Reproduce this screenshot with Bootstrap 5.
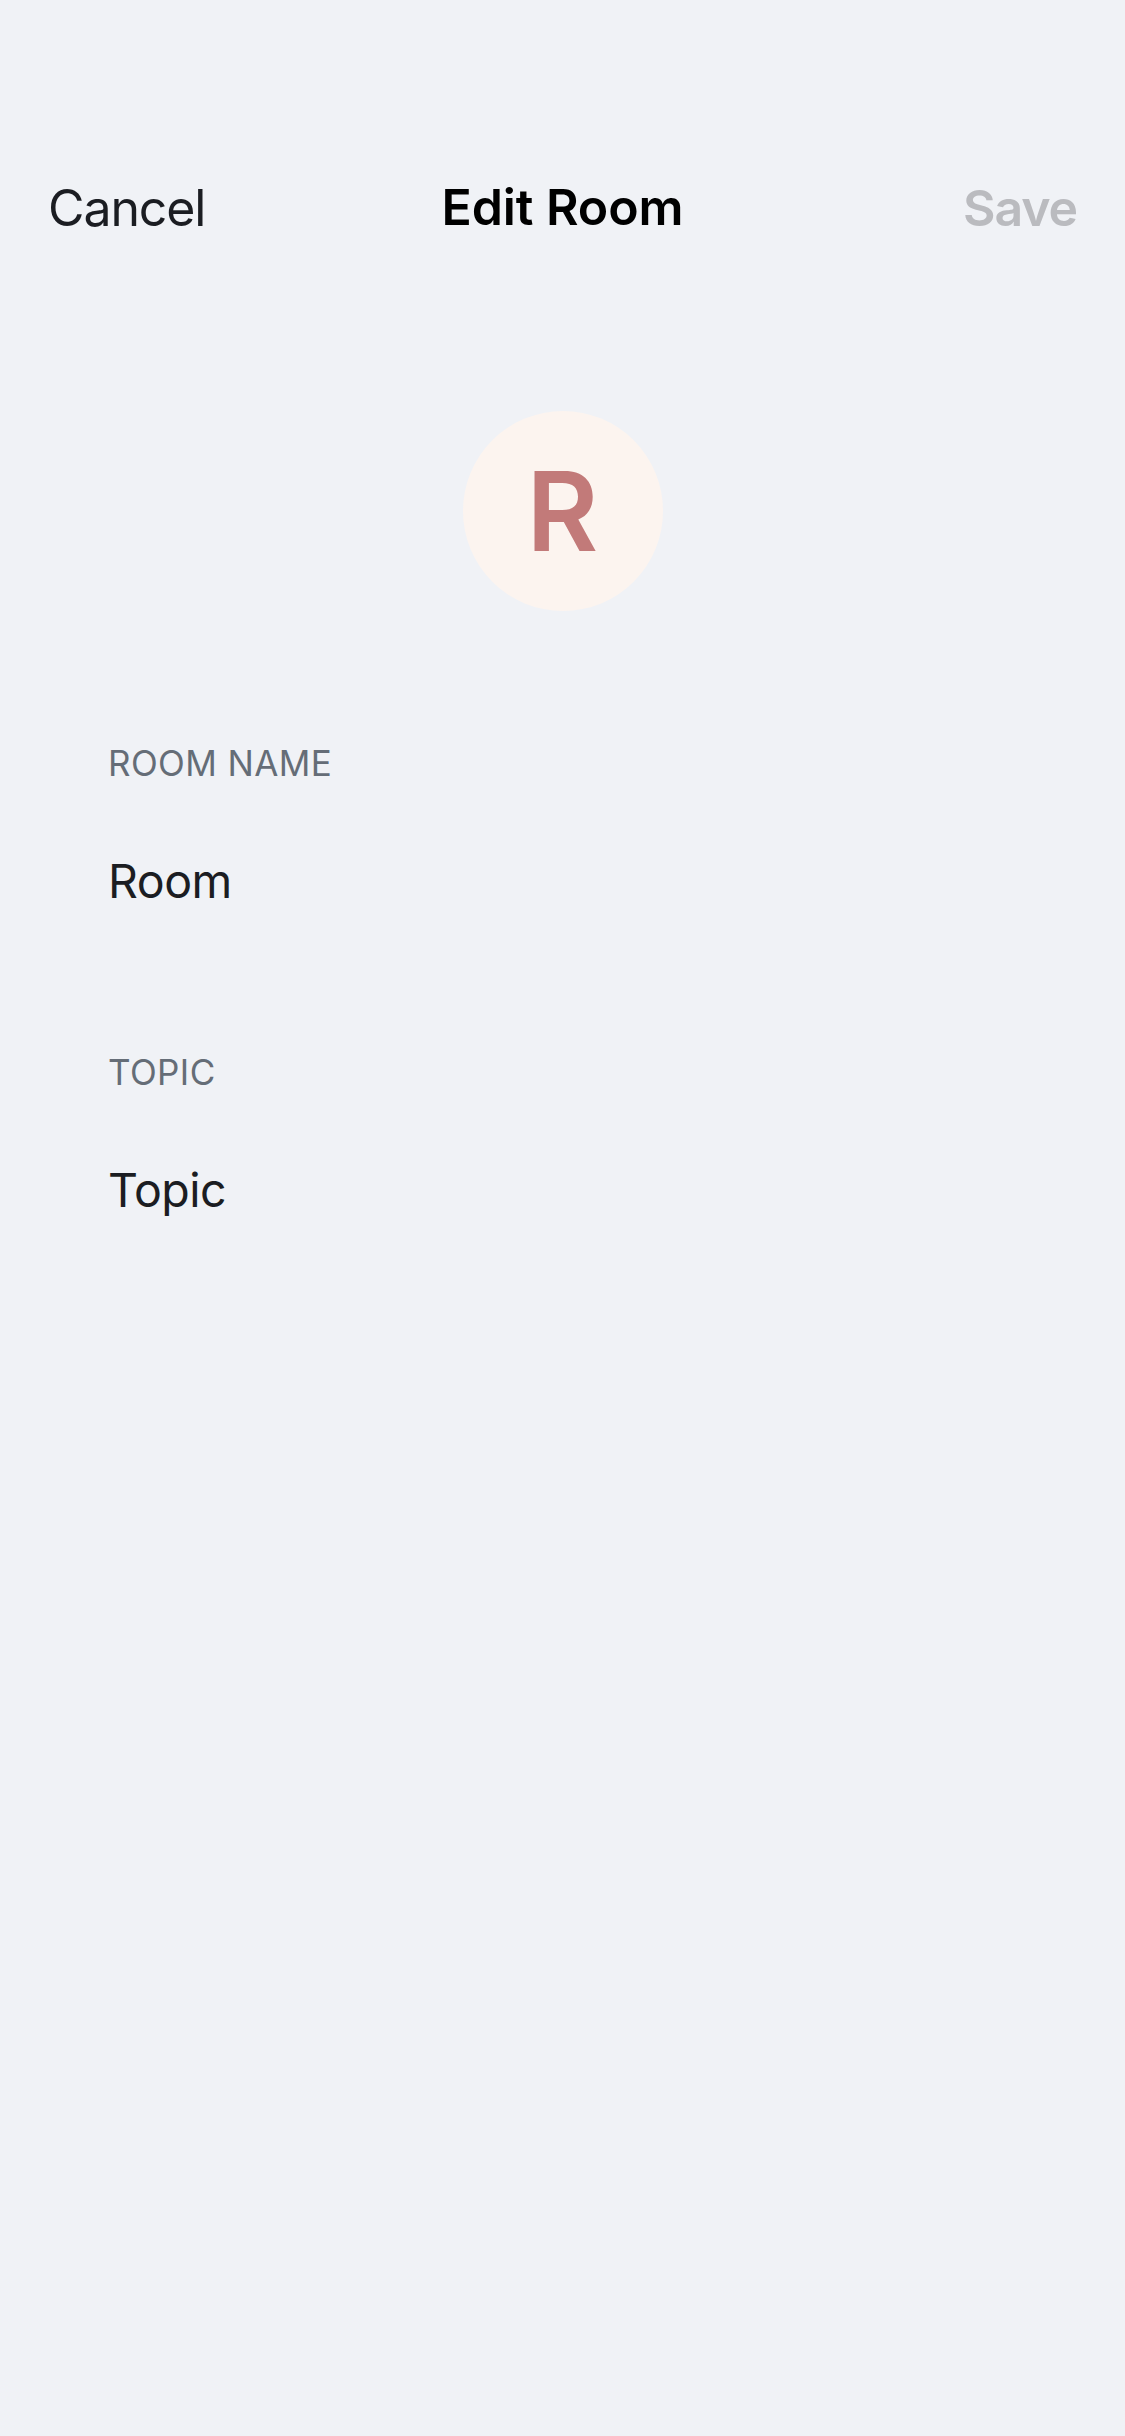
<!DOCTYPE html>
<html lang="en">
<head>
<meta charset="utf-8">
<meta name="viewport" content="width=device-width, initial-scale=1">
<title>Edit Room</title>
<link href="https://cdn.jsdelivr.net/npm/bootstrap@5.3.0/dist/css/bootstrap.min.css" rel="stylesheet">
<style>
body{background:#f0f2f6;font-family:Inter,"Liberation Sans",sans-serif;color:#1b1d22;min-height:2436px}
.topbar{height:132px;margin-top:142px;padding:0 48px}
.topbar .btn{font-size:50px;line-height:62px;letter-spacing:-1.1px;border:0;color:#1b1d22}
.topbar .btn-save{color:#babbbf;font-weight:600;opacity:1}
.room-title{font-size:50px;line-height:62px;font-weight:600;letter-spacing:-.1px;color:#000;padding-bottom:2px}
.avatar{width:200px;height:200px;margin-top:137px;background:#fcf4ef;color:#c27a79;font-size:110px;line-height:1;font-weight:600}
.fields{padding:0 108px;margin-top:127px}
.field-label{font-size:35px;line-height:50px;color:#656d77;letter-spacing:.4px}
.field-value{font-size:46.5px;line-height:66px;margin-top:60px;color:#1b1d22;letter-spacing:-.5px}
.field-block{height:309px}
</style>
</head>
<body>
<header class="topbar row g-0 align-items-center">
<div class="col text-start"><button class="btn p-0">Cancel</button></div>
<h1 class="room-title col-auto mt-0 mb-0">Edit Room</h1>
<div class="col text-end"><button class="btn btn-save p-0" disabled>Save</button></div>
</header>
<main>
<div class="avatar rounded-circle mx-auto d-flex align-items-center justify-content-center"><span>R</span></div>
<section class="fields">
<div class="field-block"><div class="field-label text-uppercase">Room name</div><div class="field-value">Room</div></div>
<div class="field-block"><div class="field-label text-uppercase">Topic</div><div class="field-value">Topic</div></div>
</section>
</main>
<script src="https://cdn.jsdelivr.net/npm/bootstrap@5.3.0/dist/js/bootstrap.bundle.min.js"></script>
</body>
</html>
